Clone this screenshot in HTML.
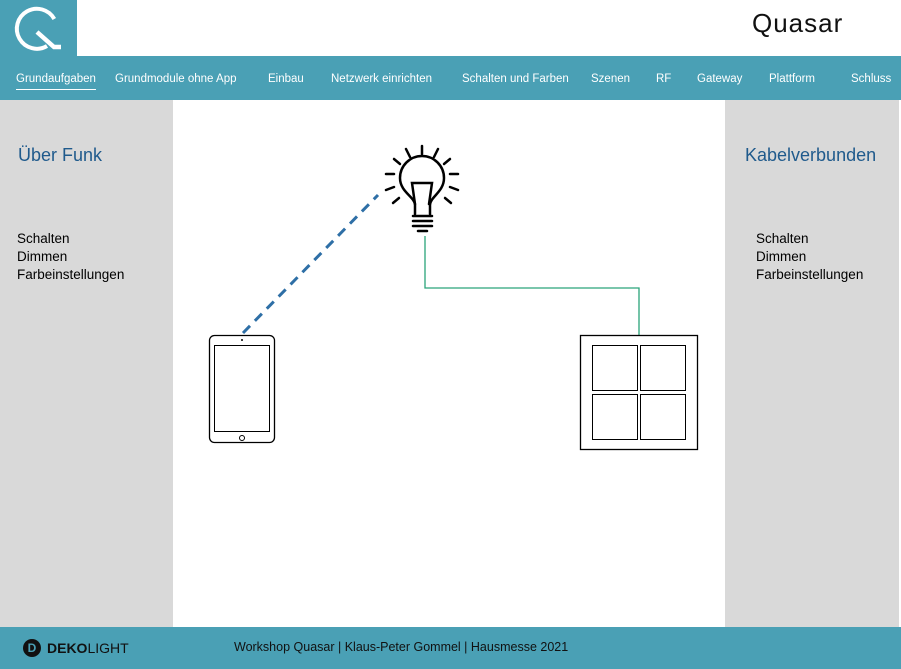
<!DOCTYPE html>
<html><head><meta charset="utf-8"><style>
*{margin:0;padding:0;box-sizing:border-box}
body{width:901px;height:669px;position:relative;background:#fff;font-family:"Liberation Sans",sans-serif;overflow:hidden}
.t{position:absolute}
.nav span{position:absolute;top:73px;font-size:11.5px;color:#fff;white-space:nowrap}
.side{position:absolute;top:100px;height:527px;background:#d9d9d9}
.h{position:absolute;top:145px;font-size:18px;color:#1f5a8c}
.l{position:absolute;top:230px;font-size:13.5px;line-height:18px;color:#000}
</style></head><body>
<div class="t" style="left:0;top:0;width:77px;height:56px;background:#4aa0b5"></div>
<svg class="t" style="left:0;top:0" width="77" height="56"><path d="M47 46 A20 20 0 1 1 54.3 19" fill="none" stroke="#fff" stroke-width="4"/><path d="M37 32 L54 47 L61 47" fill="none" stroke="#fff" stroke-width="4.5"/></svg>
<div class="t" style="left:752px;top:8px;font-size:26px;letter-spacing:1px;color:#111">Quasar</div>
<div class="t" style="left:0;top:56px;width:901px;height:44px;background:#4aa0b5"></div>
<div class="nav">
<span style="left:16px">Grundaufgaben</span>
<span style="left:115px">Grundmodule ohne App</span>
<span style="left:268px">Einbau</span>
<span style="left:331px">Netzwerk einrichten</span>
<span style="left:462px">Schalten und Farben</span>
<span style="left:591px">Szenen</span>
<span style="left:656px">RF</span>
<span style="left:697px">Gateway</span>
<span style="left:769px">Plattform</span>
<span style="left:851px">Schluss</span>
</div>
<div class="t" style="left:16px;top:89px;width:80px;height:1px;background:#fff"></div>
<div class="side" style="left:0;width:173px"></div>
<div class="side" style="left:725px;width:174px"></div>
<div class="h" style="left:18px">Über Funk</div>
<div class="h" style="left:745px">Kabelverbunden</div>
<div class="l" style="left:17px">Schalten<br>Dimmen<br>Farbeinstellungen</div>
<div class="l" style="left:756px">Schalten<br>Dimmen<br>Farbeinstellungen</div>
<svg class="t" style="left:0;top:0" width="901" height="669">
<line x1="243" y1="333" x2="378" y2="195" stroke="#2e6fa6" stroke-width="3" stroke-dasharray="10,7"/>
<polyline points="425,236 425,288 639,288 639,335" fill="none" stroke="#2aa37a" stroke-width="1.3"/>
<rect x="209.5" y="335.5" width="65" height="107" rx="5" fill="#fff" stroke="#000" stroke-width="1.3"/>
<rect x="214.5" y="345.5" width="55" height="86" fill="none" stroke="#000"/>
<circle cx="242" cy="340" r="1" fill="#000"/><circle cx="242" cy="438" r="2.5" fill="none" stroke="#000"/>
<rect x="580.5" y="335.5" width="117" height="114" fill="#fff" stroke="#000" stroke-width="1.3"/>
<rect x="592.5" y="345.5" width="45" height="45" fill="none" stroke="#000"/>
<rect x="640.5" y="345.5" width="45" height="45" fill="none" stroke="#000"/>
<rect x="592.5" y="394.5" width="45" height="45" fill="none" stroke="#000"/>
<rect x="640.5" y="394.5" width="45" height="45" fill="none" stroke="#000"/>
<g stroke="#000" stroke-width="2.5" fill="none" stroke-linecap="round">
<path d="M415 214 L415 205 C415 197 400 192 400 178 A22 22 0 0 1 444 178 C444 192 430 197 430 205 L430 214"/>
<path d="M415 204 L412 183 L432 183 L429 204"/>
<path d="M413 216 H432 M413 221 H432 M413 226 H432 M418 231 H427"/>
<path d="M422 146 V154 M406 149 L410 157 M438 149 L434 157 M394 159 L400 164 M450 159 L444 164 M386 174 H394 M450 174 H458 M386 190 L394 187 M458 190 L450 187 M393 203 L399 198 M451 203 L445 198"/>
</g>
</svg>
<div class="t" style="left:0;top:627px;width:901px;height:42px;background:#4aa0b5"></div>
<div class="t" style="left:23px;top:639px;width:18px;height:18px;border-radius:50%;background:#111;color:#4aa0b5;font-weight:bold;font-size:12px;text-align:center;line-height:18px">D</div>
<div class="t" style="left:47px;top:640px;font-size:14px;color:#111"><b>DEKO</b>LIGHT</div>
<div class="t" style="left:234px;top:640px;font-size:12.5px;color:#111">Workshop Quasar | Klaus-Peter Gommel | Hausmesse 2021</div>
</body></html>
